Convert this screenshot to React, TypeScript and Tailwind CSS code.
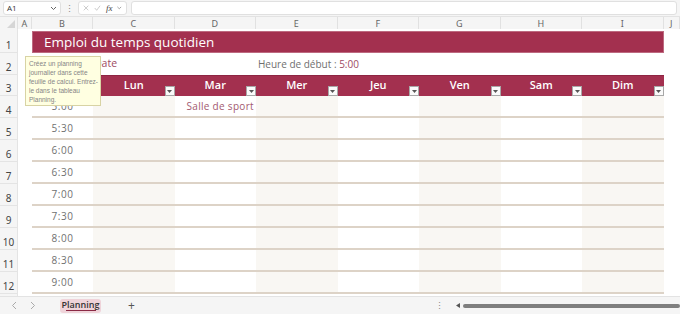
import React from 'react';

const COLS = 'grid grid-cols-[18px_14px_61px_repeat(7,81.5px)_1fr]';
const LETTERS = ['A', 'B', 'C', 'D', 'E', 'F', 'G', 'H', 'I', 'J'];
const DAYS = ['Lun', 'Mar', 'Mer', 'Jeu', 'Ven', 'Sam', 'Dim'];
const TIMES = ['5:00', '5:30', '6:00', '6:30', '7:00', '7:30', '8:00', '8:30', '9:00'];

const RowNum: React.FC<{ n?: number }> = ({ n }) => (
  <div className="bg-[#f5f5f5] border-b border-r border-[#e4e4e4] flex items-end justify-center pb-[2px] text-[10px] leading-none text-[#444] [font-family:'Noto_Sans',sans-serif]">
    {n}
  </div>
);

const Dropdown: React.FC = () => (
  <div className="absolute right-0 bottom-0 w-[10px] h-[10px] bg-[#fafafa] border border-[#a8a8a8] flex items-center justify-center">
    <svg width="5" height="3" viewBox="0 0 5 3">
      <path d="M0 0h5L2.5 3z" fill="#555" />
    </svg>
  </div>
);

const App: React.FC = () => {
  return (
    <div className="w-[680px] h-[314px] flex flex-col overflow-hidden bg-white relative [font-family:'Open_Sans',sans-serif]">
      {/* barre de formule */}
      <div className="h-[17px] flex items-center gap-[4px] px-[3px] bg-[#f5f5f5] border-b border-[#e3e3e3]">
        <div className="w-[58px] h-[14px] bg-white border border-[#e0e0e0] rounded-[3px] flex items-center justify-between px-[3px] text-[8px] text-[#333]">
          <span>A1</span>
          <svg width="7" height="5" viewBox="0 0 7 5"><path d="M1 1l2.5 2.5L6 1" stroke="#666" fill="none" /></svg>
        </div>
        <span className="text-[9px] text-[#888] leading-none">⋮</span>
        <div className="w-[49px] h-[14px] bg-white border border-[#e0e0e0] rounded-[3px] flex items-center gap-[5px] px-[4px]">
          <svg width="8" height="8" viewBox="0 0 8 8"><path d="M1 1l6 6M7 1L1 7" stroke="#bbb" /></svg>
          <svg width="9" height="8" viewBox="0 0 9 8"><path d="M1 4l2.5 3L8 1" stroke="#bbb" fill="none" /></svg>
          <span className="text-[9px] italic text-[#444] [font-family:'Liberation_Serif',serif] leading-none">fx</span>
          <svg width="6" height="4" viewBox="0 0 6 4"><path d="M0.5 0.5l2.5 2.5 2.5-2.5" stroke="#888" fill="none" /></svg>
        </div>
        <div className="flex-1 h-[14px] bg-white border border-[#e0e0e0] rounded-[3px]" />
      </div>

      {/* en-têtes de colonnes */}
      <div className={`${COLS} h-[12px] bg-[#f5f5f5] text-[9px] leading-none text-[#666] [font-family:'Noto_Sans',sans-serif]`}>
        <div className="border-r border-[#e1e1e1] flex items-end justify-end pr-[2px] pb-[1px]">
          <svg width="8" height="8" viewBox="0 0 8 8"><path d="M8 0v8H0z" fill="#d6d6d6" /></svg>
        </div>
        {LETTERS.map((l) => (
          <div key={l} className="border-r border-[#e1e1e1] flex items-center justify-center">
            {l}
          </div>
        ))}
      </div>

      {/* feuille */}
      <div className="flex-1 overflow-hidden">
        {/* ligne 1 : titre */}
        <div className={`${COLS} h-[24px]`}>
          <RowNum n={1} />
          <div />
          <div className="col-span-8 mt-[2px] bg-[#a3304f] border border-[#bd6a80] flex items-center pl-[11px] text-[13.5px] text-white">
            Emploi du temps quotidien
          </div>
          <div />
        </div>

        {/* ligne 2 */}
        <div className={`${COLS} h-[22px]`}>
          <RowNum n={2} />
          <div />
          <div />
          <div className="flex items-center pl-[1px] text-[10.5px] text-[#9e4a62]">Date</div>
          <div />
          <div className="col-span-2 flex items-center pl-[2px] whitespace-nowrap text-[10px] text-[#6f6f6f]">
            Heure de début :&nbsp;<span className="text-[#9e4a62]">5:00</span>
          </div>
          <div />
          <div />
          <div />
          <div />
        </div>

        {/* ligne 3 : en-tête du tableau (la cellule Heure est sous l'infobulle) */}
        <div className={`${COLS} h-[21px]`}>
          <RowNum n={3} />
          <div />
          {['', ...DAYS].map((d, i) => (
            <div key={i} className="relative bg-[#a3304f] border-t border-[#8e2543] flex items-center justify-center pb-[2px] text-[11px] font-semibold text-white">
              {d}
              <Dropdown />
            </div>
          ))}
          <div />
        </div>

        {/* lignes horaires */}
        {TIMES.map((t, i) => (
          <div key={t} className={`${COLS} h-[22px]`}>
            <RowNum n={i + 4} />
            <div />
            <div className="border-b-2 border-[#ddd3c7] flex items-center justify-center text-[10px] tracking-[0.6px] text-[#707070]">
              {t}
            </div>
            {DAYS.map((d, j) => (
              <div
                key={d}
                className={`border-b-2 border-[#ddd3c7] flex items-center pl-[12px] text-[10px] tracking-[0.3px] text-[#a35a70] ${j % 2 === 0 ? 'bg-[#f9f7f3]' : 'bg-white'}`}
              >
                {i === 0 && d === 'Mar' ? 'Salle de sport' : ''}
              </div>
            ))}
            <div />
          </div>
        ))}
        <div className={`${COLS} h-[22px]`}>
          <RowNum />
        </div>
      </div>

      {/* onglets */}
      <div className="h-[18px] flex items-center bg-[#f5f5f5] border-t border-[#e3e3e3] text-[#aaa]">
        <svg className="ml-[11px]" width="6" height="9" viewBox="0 0 6 9"><path d="M5 1L1.5 4.5 5 8" stroke="#aaa" fill="none" /></svg>
        <svg className="ml-[13px]" width="6" height="9" viewBox="0 0 6 9"><path d="M1 1l3.5 3.5L1 8" stroke="#aaa" fill="none" /></svg>
        <div className="ml-[24px] w-[41px] h-[14px] rounded-[3px] bg-[#efd3d9] flex flex-col items-center justify-center">
          <span className="text-[9px] font-semibold leading-none text-[#333]">Planning</span>
          <span className="mt-[1px] w-[30px] h-[1.5px] bg-[#8a2a45]" />
        </div>
        <span className="ml-[27px] text-[12px] leading-none text-[#555]">+</span>
        <span className="ml-[300px] text-[9px] leading-none text-[#888]">⋮</span>
        <div className="ml-[12px] flex-1 flex items-center gap-[2px]">
          <svg width="5" height="5" viewBox="0 0 5 5"><path d="M0 2.5L4 0v5z" fill="#555" /></svg>
          <div className="flex-1 h-[4px] rounded-full bg-[#7f7f7f]" />
        </div>
      </div>

      {/* infobulle */}
      <div className="absolute left-[25px] top-[56px] w-[76px] h-[50px] bg-[#ffffe1] border border-[#d8d3a4] pl-[3px] pt-[2px] text-[6.5px] leading-[9px] text-[#858585] whitespace-nowrap overflow-hidden [font-family:'Liberation_Sans',sans-serif]">
        Créez un planning
        <br />
        journalier dans cette
        <br />
        feuille de calcul. Entrez-
        <br />
        le dans le tableau
        <br />
        Planning.
      </div>
    </div>
  );
};

export default App;
